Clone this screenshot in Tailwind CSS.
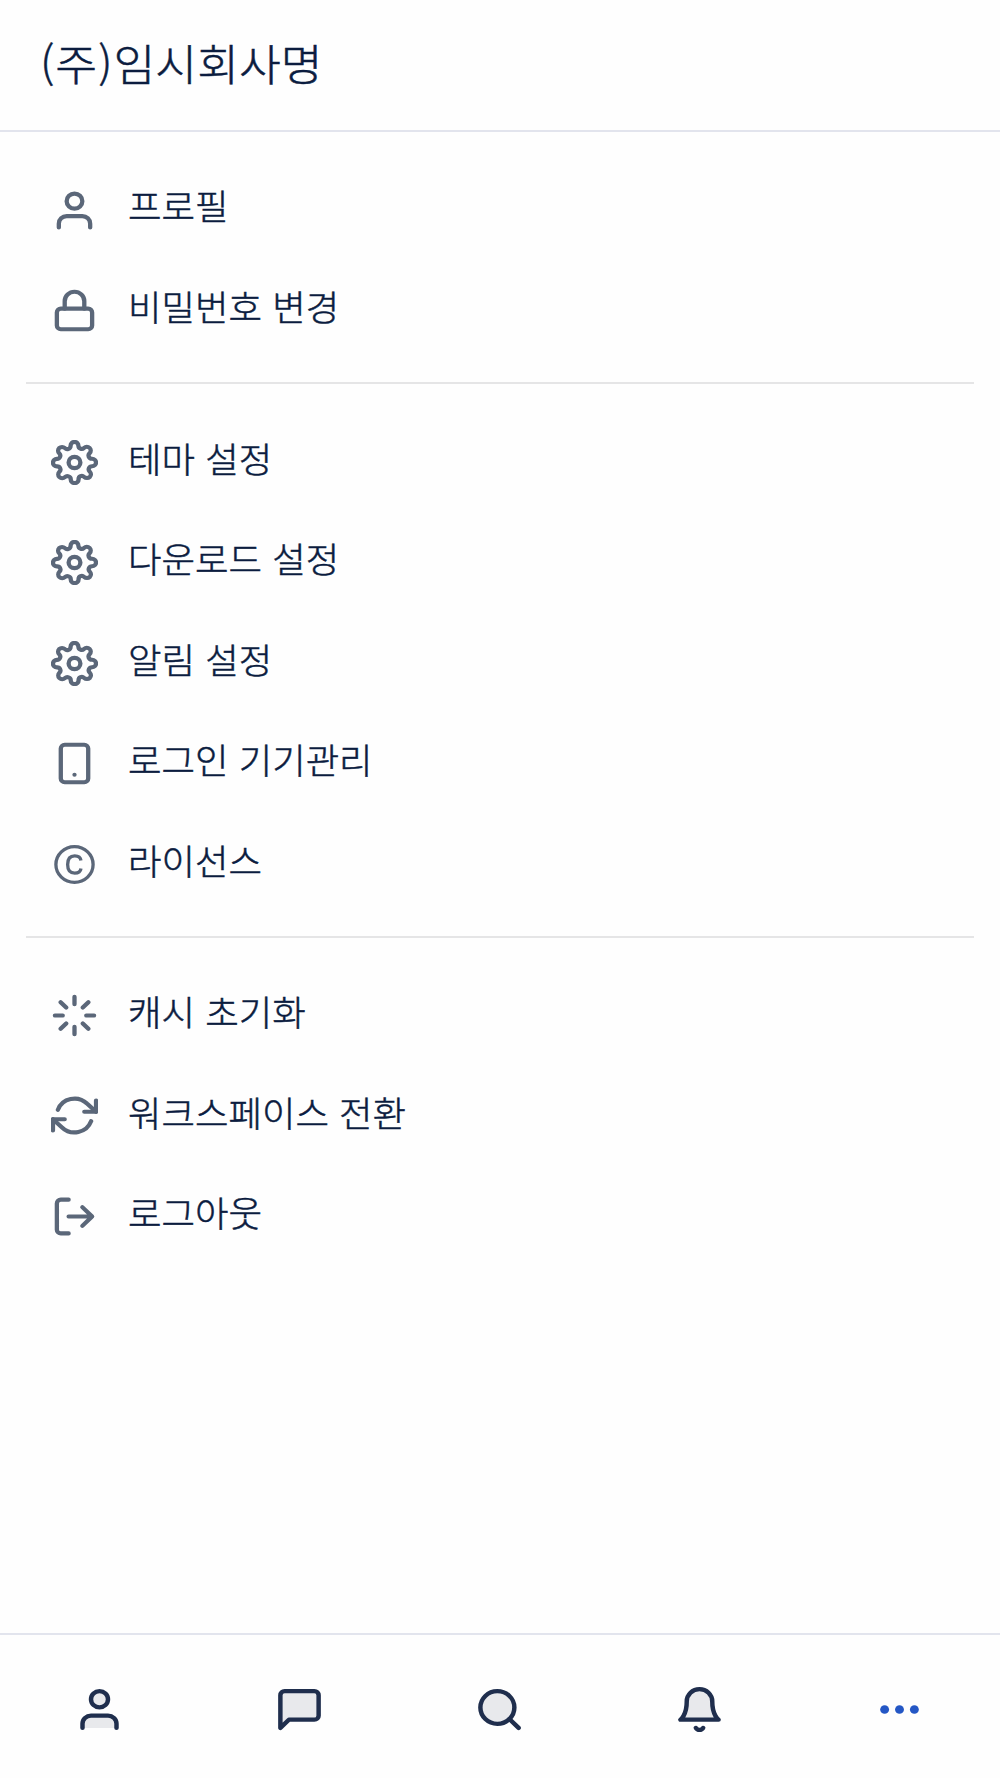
<!DOCTYPE html>
<html lang="ko">
<head>
    <meta charset="UTF-8">
    <title>더보기</title>
    <script src="https://cdn.jsdelivr.net/npm/@tailwindcss/browser@4"></script>
</head>
<body class="bg-white">
    <!-- Shared gear icon -->
    <svg class="hidden">
        <symbol id="gear" viewBox="0 0 24 24" preserveAspectRatio="none">
            <circle cx="12" cy="12" r="3"/>
            <path d="M19.4 15a1.65 1.65 0 0 0 .33 1.82l.06.06a2 2 0 0 1 0 2.83 2 2 0 0 1-2.83 0l-.06-.06a1.65 1.65 0 0 0-1.82-.33 1.65 1.65 0 0 0-1 1.51V21a2 2 0 0 1-2 2 2 2 0 0 1-2-2v-.09A1.65 1.65 0 0 0 9 19.4a1.65 1.65 0 0 0-1.82.33l-.06.06a2 2 0 0 1-2.83 0 2 2 0 0 1 0-2.83l.06-.06a1.65 1.65 0 0 0 .33-1.82 1.65 1.65 0 0 0-1.51-1H3a2 2 0 0 1-2-2 2 2 0 0 1 2-2h.09A1.65 1.65 0 0 0 4.6 9a1.65 1.65 0 0 0-.33-1.82l-.06-.06a2 2 0 0 1 0-2.83 2 2 0 0 1 2.83 0l.06.06a1.65 1.65 0 0 0 1.82.33H9a1.65 1.65 0 0 0 1-1.51V3a2 2 0 0 1 2-2 2 2 0 0 1 2 2v.09a1.65 1.65 0 0 0 1 1.51 1.65 1.65 0 0 0 1.82-.33l.06-.06a2 2 0 0 1 2.83 0 2 2 0 0 1 0 2.83l-.06.06a1.65 1.65 0 0 0-.33 1.82V9a1.65 1.65 0 0 0 1.51 1H21a2 2 0 0 1 2 2 2 2 0 0 1-2 2h-.09a1.65 1.65 0 0 0-1.51 1z"/>
        </symbol>
    </svg>

    <div class="flex h-[1778px] w-[1000px] flex-col bg-[#fefefe] font-['Noto_Sans_CJK_KR',sans-serif] font-light text-[#0b1c3f] [-webkit-text-stroke:0.5px_currentColor]">
        <!-- Header -->
        <header class="flex h-[132px] shrink-0 items-center border-b-2 border-[#e2e4ed] pb-[5px] pl-10">
            <h1 class="origin-left scale-x-[1.045] text-[43.5px] leading-none"><span class="tracking-[1px]">(주)</span>임시회사명</h1>
        </header>

        <!-- Menu -->
        <main class="flex-1 px-[26px] pt-[28px]">
            <ul class="pb-[21px]">
                <li class="flex h-[100.5px] items-center gap-[30.7px] pl-[24.5px]">
                    <svg class="h-[45px] w-[47px] shrink-0 text-[#5b6779]" viewBox="0 0 24 24" preserveAspectRatio="none" fill="none" stroke="currentColor" stroke-width="2.2" stroke-linecap="round" stroke-linejoin="round"><path d="M20 21v-2a4 4 0 0 0-4-4H8a4 4 0 0 0-4 4v2"/><circle cx="12" cy="7" r="4"/></svg>
                    <span class="mb-[11px] origin-left scale-x-[1.04] text-[35px] leading-none">프로필</span>
                </li>
                <li class="flex h-[100.5px] items-center gap-[30.7px] pl-[24.5px]">
                    <svg class="h-[45px] w-[47px] shrink-0 text-[#5b6779]" viewBox="0 0 24 24" preserveAspectRatio="none" fill="none" stroke="currentColor" stroke-width="2.2" stroke-linecap="round" stroke-linejoin="round"><rect x="3" y="11" width="18" height="11" rx="2"/><path d="M7 11V7a5 5 0 0 1 10 0v4"/></svg>
                    <span class="mb-[11px] origin-left scale-x-[1.04] text-[35px] leading-none">비밀번호 변경</span>
                </li>
            </ul>
            <ul class="border-t-2 border-[#e5e5e6] pt-[28px] pb-[21.5px]">
                <li class="flex h-[100.5px] items-center gap-[30.7px] pl-[24.5px]">
                    <svg class="h-[45px] w-[47px] shrink-0 text-[#5b6779]" fill="none" stroke="currentColor" stroke-width="2.2" stroke-linecap="round" stroke-linejoin="round"><use href="#gear"/></svg>
                    <span class="mb-[10px] origin-left scale-x-[1.04] text-[35px] leading-none">테마 설정</span>
                </li>
                <li class="flex h-[100.5px] items-center gap-[30.7px] pl-[24.5px]">
                    <svg class="h-[45px] w-[47px] shrink-0 text-[#5b6779]" fill="none" stroke="currentColor" stroke-width="2.2" stroke-linecap="round" stroke-linejoin="round"><use href="#gear"/></svg>
                    <span class="mb-[10px] origin-left scale-x-[1.04] text-[35px] leading-none">다운로드 설정</span>
                </li>
                <li class="flex h-[100.5px] items-center gap-[30.7px] pl-[24.5px]">
                    <svg class="h-[45px] w-[47px] shrink-0 text-[#5b6779]" fill="none" stroke="currentColor" stroke-width="2.2" stroke-linecap="round" stroke-linejoin="round"><use href="#gear"/></svg>
                    <span class="mb-[10px] origin-left scale-x-[1.04] text-[35px] leading-none">알림 설정</span>
                </li>
                <li class="flex h-[100.5px] items-center gap-[30.7px] pl-[24.5px]">
                    <svg class="h-[45px] w-[47px] shrink-0 text-[#5b6779]" viewBox="0 0 24 24" preserveAspectRatio="none" fill="none" stroke="currentColor" stroke-width="2.2" stroke-linecap="round" stroke-linejoin="round"><rect x="5" y="2" width="14" height="20" rx="2"/><path d="M12 18h.01"/></svg>
                    <span class="mb-[10px] origin-left scale-x-[1.04] text-[35px] leading-none">로그인 기기관리</span>
                </li>
                <li class="flex h-[100.5px] items-center gap-[30.7px] pl-[24.5px]">
                    <svg class="h-[45px] w-[47px] shrink-0 text-[#5b6779]" viewBox="0 0 24 24" preserveAspectRatio="none" fill="none" stroke="currentColor" stroke-width="1.7"><circle cx="12" cy="12" r="9.5"/><path d="M15.3 9.9C15.1 8.3 13.9 7.4 12.1 7.4 9.8 7.4 8.5 9.1 8.5 12s1.3 4.6 3.6 4.6c1.8 0 3-.9 3.2-2.5"/></svg>
                    <span class="mb-[10px] origin-left scale-x-[1.04] text-[35px] leading-none">라이선스</span>
                </li>
            </ul>
            <ul class="border-t-2 border-[#e5e5e6] pt-[27px]">
                <li class="flex h-[100.5px] items-center gap-[30.7px] pl-[24.5px]">
                    <svg class="h-[45px] w-[47px] shrink-0 text-[#5b6779]" viewBox="0 0 24 24" preserveAspectRatio="none" fill="none" stroke="currentColor" stroke-width="2.2" stroke-linecap="round" stroke-linejoin="round"><path d="M12 2v4M12 18v4M4.93 4.93l2.83 2.83M16.24 16.24l2.83 2.83M2 12h4M18 12h4M4.93 19.07l2.83-2.83M16.24 7.76l2.83-2.83"/></svg>
                    <span class="mb-[9px] origin-left scale-x-[1.04] text-[35px] leading-none">캐시 초기화</span>
                </li>
                <li class="flex h-[100.5px] items-center gap-[30.7px] pl-[24.5px]">
                    <svg class="h-[45px] w-[47px] shrink-0 text-[#5b6779]" viewBox="0 0 24 24" preserveAspectRatio="none" fill="none" stroke="currentColor" stroke-width="2.2" stroke-linecap="round" stroke-linejoin="round"><path d="M23 4v6h-6M1 20v-6h6"/><path d="M3.51 9a9 9 0 0 1 14.85-3.36L23 10M1 14l4.64 4.36A9 9 0 0 0 20.49 15"/></svg>
                    <span class="mb-[9px] origin-left scale-x-[1.04] text-[35px] leading-none">워크스페이스 전환</span>
                </li>
                <li class="flex h-[100.5px] items-center gap-[30.7px] pl-[24.5px]">
                    <svg class="h-[45px] w-[47px] shrink-0 text-[#5b6779]" viewBox="0 0 24 24" preserveAspectRatio="none" fill="none" stroke="currentColor" stroke-width="2.2" stroke-linecap="round" stroke-linejoin="round"><path d="M9 21H5a2 2 0 0 1-2-2V5a2 2 0 0 1 2-2h4M16 17l5-5-5-5M21 12H9"/></svg>
                    <span class="mb-[9px] origin-left scale-x-[1.04] text-[35px] leading-none">로그아웃</span>
                </li>
            </ul>
        </main>

        <!-- Bottom tabs -->
        <nav class="grid h-[145px] shrink-0 grid-cols-5 justify-items-center border-t-2 border-[#e2e4ed] pt-[49.5px] text-[#1f2e4d]">
            <svg class="mr-px h-[49px] w-[51px]" viewBox="0 0 24 24" preserveAspectRatio="none" fill="#e8e9ec" stroke="currentColor" stroke-width="2.1" stroke-linecap="round" stroke-linejoin="round"><path d="M20 21v-2a4 4 0 0 0-4-4H8a4 4 0 0 0-4 4v2"/><circle cx="12" cy="7" r="4"/></svg>
            <svg class="mr-px h-[49px] w-[51px]" viewBox="0 0 24 24" preserveAspectRatio="none" fill="#e8e9ec" stroke="currentColor" stroke-width="2.1" stroke-linecap="round" stroke-linejoin="round"><path d="M21 15a2 2 0 0 1-2 2H7l-4 4V5a2 2 0 0 1 2-2h14a2 2 0 0 1 2 2z"/></svg>
            <svg class="mr-px h-[49px] w-[51px]" viewBox="0 0 24 24" preserveAspectRatio="none" fill="#e8e9ec" stroke="currentColor" stroke-width="2.1" stroke-linecap="round" stroke-linejoin="round"><circle cx="11" cy="11" r="8"/><path d="M21 21l-4.35-4.35"/></svg>
            <svg class="mr-px h-[49px] w-[51px]" viewBox="0 0 24 24" preserveAspectRatio="none" fill="#e8e9ec" stroke="currentColor" stroke-width="2.1" stroke-linecap="round" stroke-linejoin="round"><path d="M18 8A6 6 0 0 0 6 8c0 7-3 9-3 9h18s-3-2-3-9"/><path d="M13.73 21a2 2 0 0 1-3.46 0"/></svg>
            <svg class="mr-px h-[49px] w-[51px] text-[#2457c5]" viewBox="0 0 24 24" preserveAspectRatio="none" fill="currentColor"><circle cx="5" cy="12" r="2.1"/><circle cx="12" cy="12" r="2.1"/><circle cx="19" cy="12" r="2.1"/></svg>
        </nav>
    </div>
</body>
</html>
